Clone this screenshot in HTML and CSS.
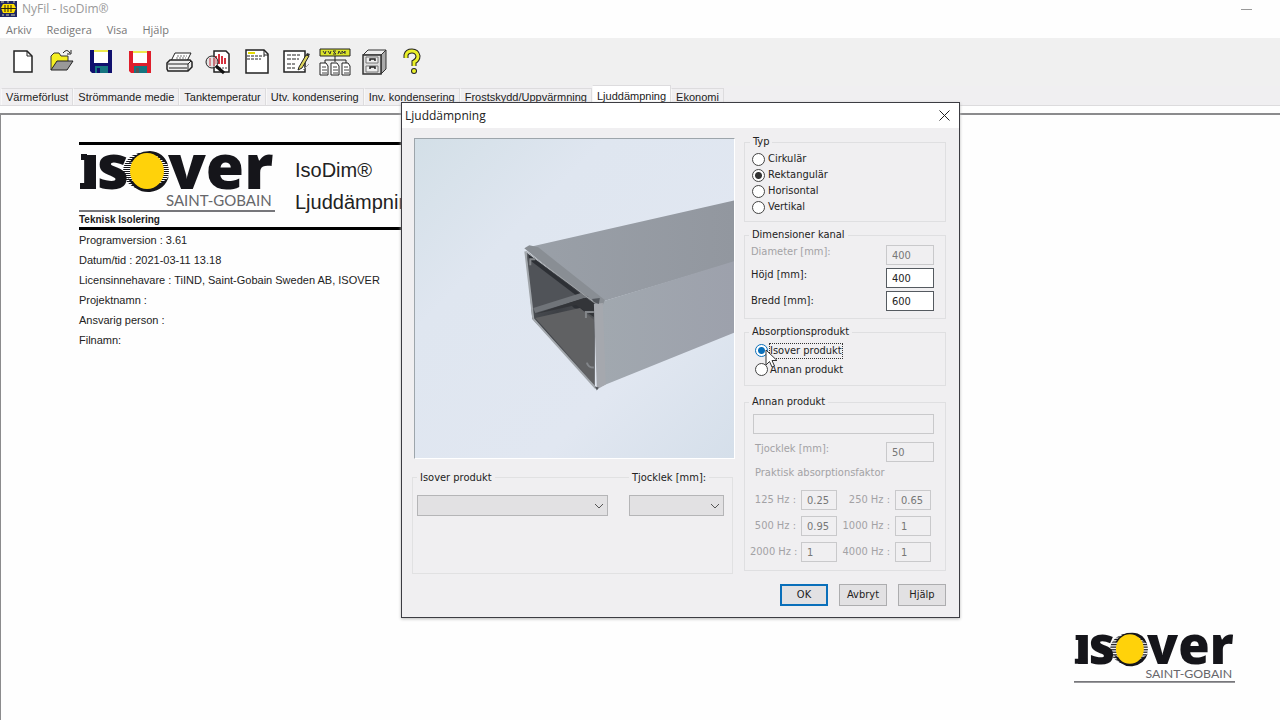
FILE: index.html
```html
<!DOCTYPE html>
<html lang="sv">
<head>
<meta charset="utf-8">
<title>NyFil - IsoDim®</title>
<link rel="stylesheet" href="styles.css">
</head>
<body>
<svg class="defs" width="0" height="0" aria-hidden="true">
  <defs>
    <linearGradient id="bg" x1="0" y1="0" x2="1" y2="1">
      <stop offset="0" stop-color="#d3dfe7"/><stop offset=".3" stop-color="#dfe6f0"/><stop offset=".7" stop-color="#e1e7f1"/><stop offset="1" stop-color="#d5dfea"/>
    </linearGradient>
    <linearGradient id="top" x1="0" y1="0" x2="1" y2="0">
      <stop offset="0" stop-color="#9aa0a8"/><stop offset="1" stop-color="#92979f"/>
    </linearGradient>
    <linearGradient id="side" x1="0" y1="0" x2="1" y2="0">
      <stop offset="0" stop-color="#a1a8af"/><stop offset="1" stop-color="#9da1ac"/>
    </linearGradient>
    <linearGradient id="inside" x1="0" y1="0" x2="1" y2="1">
      <stop offset="0" stop-color="#5a5e63"/><stop offset=".45" stop-color="#3d4045"/><stop offset="1" stop-color="#66676a"/>
    </linearGradient>
    <pattern id="lines" width="4" height="2" patternUnits="userSpaceOnUse"><path d="M0 .5h4" stroke="#15151a"/></pattern>
    <symbol id="isover" viewBox="0 0 196 62">
      <g class="logo-word">
        <text x="1" y="38">ı</text><path d="M2 3h6v6H2zM1 32h15v6H1z" fill="#15151a"/>
        <text x="18" y="38">s</text><text x="89" y="38">ver</text>
      </g>
      <ellipse cx="67" cy="20" rx="23" ry="19" fill="url(#lines)"/>
      <path d="M50 12Q57 0 71 0q14 1 18 14L78 5zM49 27l12 8 20-3q7-3 9-7-4 14-19 16-15 1-22-14z" fill="#15151a"/>
      <ellipse cx="68" cy="20" rx="17" ry="18" fill="#ffd20a"/>
      <text class="logo-sub" x="87" y="55">SAINT-GOBAIN</text>
      <path d="M0 60h196" stroke="#77777b" stroke-width="2"/>
    </symbol>
  </defs>
</svg>
<div class="app">
  <header class="titlebar">
    <svg class="app-icon" width="17" height="16" viewBox="0 0 17 16"><path fill="#202766" d="M0 0h17v16H0z"/><path fill="#ffe000" d="M3 3h11l2 4-2 5H3L1 7z"/><path d="M1 7.500h15M5 4v7M8 4v7M11 4v7" stroke="#282310"/><path d="M2 14h2m2 0h3m2 0h4M1 1h3m3 0h2m4 0h2" stroke="#d7d6a5"/></svg>
    <span class="window-name">NyFil - IsoDim®</span>
    <button class="minimize" aria-label="Minimera"></button>
  </header>
  <nav class="menu"><button>Arkiv</button><button>Redigera</button><button>Visa</button><button>Hjälp</button></nav>
  <div class="toolbar">
    <button aria-label="Ny"><svg viewBox="0 0 32 32"><path d="M7 5h13l5 5v16H7z" fill="#fff" stroke="#222" stroke-width="1.500"/><path d="M20 5v5h5" fill="none" stroke="#222"/></svg></button>
    <button aria-label="Öppna"><svg viewBox="0 0 32 32"><path d="M5 24V10l3-3h5l2 3h7v5" fill="#f5ef20" stroke="#333"/><path d="M5 24l6-9h16l-6 9z" fill="#999" stroke="#222"/><path d="M17 7q4-5 7 0m1-3v4h-4" fill="none" stroke="#222"/></svg></button>
    <button aria-label="Spara"><svg viewBox="0 0 32 32"><path d="M5 4h22v23H7l-2-2z" fill="#10106e"/><path d="M9 5h14v12H9z" fill="#fff"/><path d="M9 4h14v2H9z" fill="#ece94d"/><path d="M10 20h13v7H10z" fill="#167580"/><path d="M12 22h3v5h-3z" fill="#10106e"/></svg></button>
    <button aria-label="Spara som"><svg viewBox="0 0 32 32"><path d="M5 5h22v22H7l-2-2z" fill="#df1e2b"/><path d="M9 6h14v11H9z" fill="#fff"/><path d="M9 5h14v2H9z" fill="#ece94d"/><path d="M10 20h13v7H10z" fill="#167580"/><path d="M12 22h3v5h-3z" fill="#555"/></svg></button>
    <button aria-label="Skriv ut"><svg viewBox="0 0 32 32"><path d="M8 15l4-8h16l-4 8z" fill="#fff" stroke="#222"/><path d="M4 17l3-3h20l2 2v5l-4 4H5l-1-2z" fill="#eee" stroke="#222" stroke-width="1.500"/><path d="M5 18h20l3-3M6 22h18M25 18v7" fill="none" stroke="#222"/><path d="M14 10h10M13 12h10" stroke="#777" stroke-dasharray="2 1"/></svg></button>
    <button aria-label="Förhandsgranska"><svg viewBox="0 0 32 32"><path d="M12 5h12l3 3v18H12z" fill="#fff" stroke="#222" stroke-width="1.500"/><path d="M14 10v8m3-10v10m3-8v8m3-6v6" stroke="#d5313e" stroke-width="2"/><path d="M14 22h12" stroke="#444" stroke-dasharray="2 1"/><circle cx="10" cy="16" r="6" fill="#ddd" fill-opacity=".7" stroke="#222"/><path d="M8 12v8m4-8v8" stroke="#cf3340"/><path d="M14 20l8 7" stroke="#111" stroke-width="3"/></svg></button>
    <button aria-label="Rapport"><svg viewBox="0 0 32 32"><path d="M5 4h18l4 4v19H5z" fill="#fff" stroke="#222" stroke-width="1.500"/><path d="M23 4v5h4" fill="none" stroke="#222"/><path d="M7 7h7" stroke="#e4db00" stroke-width="2"/><path d="M6 10h18M6 13h14" stroke="#222" stroke-dasharray="3 1"/></svg></button>
    <button aria-label="Redigera rapport"><svg viewBox="0 0 32 32"><path d="M4 5h21v21H4z" fill="#fff" stroke="#222" stroke-width="1.500"/><path d="M7 9h13M7 13h12M7 18h8M7 22h8" stroke="#222" stroke-dasharray="4 1"/><path d="M19 21l7-12 3 1-7 12-4 2z" fill="#ddd45b" stroke="#222"/><path d="M26 9l1-2 3 1-1 2" fill="#333"/><path d="M23 24l6-6" stroke="#999"/></svg></button>
    <button aria-label="VVS AMA"><svg viewBox="0 0 32 32"><path d="M1 3h30v7H1z" fill="#dbe42a" stroke="#222"/><path d="M4 5l2 3 1-3m2 0l2 3 1-3m5 0h-3l3 3h-3m5 0l1-3 2 3m1 0V5l2 2 1-2v3" fill="none" stroke="#333"/><path d="M16 10v6M6 18v-4h21v4" fill="none" stroke="#222"/><path d="M1 17h6l2 3v9H1zM12 17h6l2 3v9h-8zM23 17h6l2 3v9h-8z" fill="#fff" stroke="#222"/><path d="M3 21h4m-4 3h5m-5 3h5m6-6h4m-4 3h5m-5 3h5m6-6h4m-4 3h5m-5 3h5" stroke="#444"/></svg></button>
    <button aria-label="Arkivskåp"><svg viewBox="0 0 32 32"><path d="M5 9l5-5h18l-5 5z" fill="#eee" stroke="#333"/><path d="M23 9l5-5v19l-5 5z" fill="#aaa" stroke="#333"/><path d="M5 9h18v19H5z" fill="#ddd" stroke="#333" stroke-width="1.500"/><path d="M8 11h12v6H8zM8 20h12v6H8z" fill="#eee" stroke="#777"/><path d="M12 15v-2h5v2m-5 8v-2h5v2" fill="none" stroke="#222" stroke-width="1.500"/></svg></button>
    <button aria-label="Hjälp"><svg viewBox="0 0 32 32"><path d="M9 12V9q1-4 6-4t6 5q0 4-4 6v4" fill="none" stroke="#222" stroke-width="5"/><circle cx="17" cy="25" r="3" fill="#222"/><path d="M9 12V9q1-4 6-4t6 5q0 4-4 6v4" fill="none" stroke="#eaf02a" stroke-width="3"/><circle cx="17" cy="25" r="2" fill="#eaf02a"/></svg></button>
  </div>
  <div class="tabs" role="tablist">
    <button role="tab">Värmeförlust</button><button role="tab">Strömmande medie</button><button role="tab">Tanktemperatur</button><button role="tab">Utv. kondensering</button><button role="tab">Inv. kondensering</button><button role="tab">Frostskydd/Uppvärmning</button><button role="tab" aria-selected="true" class="selected">Ljuddämpning</button><button role="tab">Ekonomi</button>
  </div>
  <main class="page">
    <div class="doc-head">
      <div>
        <svg class="doc-logo" viewBox="0 0 196 62" role="img" aria-label="Isover Saint-Gobain"><use href="#isover"/></svg>
        <div class="division">Teknisk Isolering</div>
      </div>
      <div class="doc-title"><h1>IsoDim®</h1><h1>Ljuddämpning</h1></div>
    </div>
    <div class="doc-info">
      <p>Programversion : 3.61</p><p>Datum/tid : 2021-03-11 13.18</p><p>Licensinnehavare : TiIND, Saint-Gobain Sweden AB, ISOVER</p><p>Projektnamn :</p><p>Ansvarig person :</p><p>Filnamn:</p>
    </div>
  </main>
</div>
<svg class="watermark" viewBox="0 0 196 62" role="img" aria-label="Isover Saint-Gobain"><use href="#isover"/></svg>

<form class="dialog" role="dialog" aria-labelledby="dialog-title">
  <div class="dialog-bar"><span id="dialog-title">Ljuddämpning</span>
    <button type="button" aria-label="Stäng"><svg width="11" height="11" viewBox="0 0 11 11"><path d="M.5.5l10 10m0-10l-10 10" stroke="#222"/></svg></button>
  </div>
  <div class="dialog-body">
    <div class="left">
      <svg class="duct" viewBox="0 0 321 321" role="img" aria-label="Rektangulär kanal">
        <path fill="url(#bg)" d="M0 0h321v321H0z"/>
        <path fill="url(#top)" d="M114 109L321 62v62L187 164z"/>
        <path fill="url(#side)" d="M187 164L321 123v72L187 249z"/>
        <path fill="#898e94" d="M110 110l5-3 9 2 67 53-2 5-8 1z"/>
        <path fill="url(#inside)" d="M112 114l69 51v84l-63-68z"/>
        <path fill="#2d3035" d="M114 116l66 50v10l-20-6-45-45z"/>
        <path fill="#505358" d="M113 120l50 38-44 14z"/>
        <path fill="#707479" d="M119 170l48-15 8 4-54 16z"/>
        <path fill="#333539" d="M121 176l41-9 18 12v-14l-10-5z"/>
        <path fill="#606163" d="M121 180l45-10 14 12v64z"/>
        <path d="M172 180v-6h8m-7 51q1 5 7 5M116 127v-6h5" fill="none" stroke="#83868a" stroke-width="2"/>
        <path d="M111 113l8 68 63 70" fill="none" stroke="#a1a6ab" stroke-width="2"/>
        <path d="M112 113l69 52" stroke="#a1a4a8"/>
        <path fill="#a5a8ae" d="M180 166l9-1 3 82-9 5z"/>
        <path fill="#54585e" d="M178 161l8-1-1 6-5-2zM181 249l4 1-2 3z"/>
      </svg>
      <div class="product-box">
        <label for="product">Isover produkt</label><label for="thickness">Tjocklek [mm]:</label>
        <div class="pick"><select id="product"><option></option></select><svg width="10" height="6" viewBox="0 0 10 6"><path d="M1 1l4 4 4-4" fill="none" stroke="#555"/></svg></div>
        <div class="pick"><select id="thickness"><option></option></select><svg width="10" height="6" viewBox="0 0 10 6"><path d="M1 1l4 4 4-4" fill="none" stroke="#555"/></svg></div>
      </div>
    </div>
    <div class="right">
      <fieldset class="type"><legend>Typ</legend>
        <label class="choice"><input type="radio" name="type">Cirkulär</label>
        <label class="choice"><input type="radio" name="type" checked>Rektangulär</label>
        <label class="choice"><input type="radio" name="type">Horisontal</label>
        <label class="choice"><input type="radio" name="type">Vertikal</label>
      </fieldset>
      <fieldset class="size"><legend>Dimensioner kanal</legend>
        <div class="field off"><label for="dia">Diameter [mm]:</label><input id="dia" value="400" disabled></div>
        <div class="field"><label for="hojd">Höjd [mm]:</label><input id="hojd" value="400"></div>
        <div class="field mid"><label for="bredd">Bredd [mm]:</label><input id="bredd" value="600"></div>
      </fieldset>
      <fieldset class="absorption"><legend>Absorptionsprodukt</legend>
        <label class="choice active"><input type="radio" name="abs" checked><span>Isover produkt</span>
          <svg class="pointer" width="13" height="20" viewBox="0 0 13 20"><path d="M1 1v15l3.500-3.500L7 18l2.500-1L7 11.500h5z" fill="#fff" stroke="#333"/></svg></label>
        <label class="choice"><input type="radio" name="abs">Annan produkt</label>
      </fieldset>
      <fieldset class="other off"><legend>Annan produkt</legend>
        <input class="wide" aria-label="Annan produkt" disabled>
        <div class="field"><label for="tj">Tjocklek [mm]:</label><input id="tj" value="50" disabled></div>
        <p>Praktisk absorptionsfaktor</p>
        <div class="bands">
          <label for="f125">125 Hz :</label><input id="f125" value="0.25" disabled><label for="f250">250 Hz :</label><input id="f250" value="0.65" disabled>
          <label for="f500">500 Hz :</label><input id="f500" value="0.95" disabled><label for="f1000">1000 Hz :</label><input id="f1000" value="1" disabled>
          <label for="f2000">2000 Hz :</label><input id="f2000" value="1" disabled><label for="f4000">4000 Hz :</label><input id="f4000" value="1" disabled>
        </div>
      </fieldset>
      <div class="actions"><button type="button" class="default">OK</button><button type="button">Avbryt</button><button type="button">Hjälp</button></div>
    </div>
  </div>
</form>
</body>
</html>
```

FILE: styles.css
```css
* { box-sizing: border-box; }
body { margin: 0; background: #fefefe; color: #222; font: 11px/14px "DejaVu Sans Condensed", "DejaVu Sans", sans-serif; }
button, input, select { font: inherit; color: inherit; margin: 0; }
p, h1 { margin: 0; }
.defs { position: absolute; }
.app { min-height: 100vh; display: flex; flex-direction: column; }

.titlebar { height: 18px; display: flex; align-items: center; gap: 5px; color: #999; font: 12px/16px "Open Sans", sans-serif; }
.window-name { flex: 1; }
.minimize { width: 11px; height: 1px; padding: 0; border: 0; background: #999; margin-right: 28px; }
.menu { height: 20px; display: flex; gap: 15px; padding: 4px 6px 0; align-items: center; }
.menu button { border: 0; padding: 0; background: none; color: #777; font: 11px/16px "Open Sans", sans-serif; }

.toolbar { height: 48px; background: #f0f0f0; display: flex; align-items: center; padding-left: 3px; }
.toolbar button { width: 39px; height: 40px; padding: 0; border: 0; background: none; display: grid; place-items: center; }
.toolbar svg { width: 32px; height: 32px; }

.tabs { height: 20px; background: #f0eff1; display: flex; align-items: flex-end; border-bottom: 1px solid #dcdbdd; padding-left: 1px; }
.tabs button { height: 17px; border: 1px solid #dddcde; border-left-color: #f8f8f8; border-bottom: 0; background: #f0eff1; padding: 0 4px; white-space: nowrap; font: 11px/16px "Liberation Sans", Arial, sans-serif; }
.tabs .selected { height: 20px; background: #fff; }

.page { flex: 1; margin-top: 7px; border-top: 2px solid #8b8b8d; border-left: 1px solid #8b8b8d; padding: 27px 78px; font-family: "Liberation Sans", Arial, sans-serif; }
.doc-head { width: 620px; max-width: 100%; border-top: 3px solid #000; border-bottom: 3px solid #000; display: flex; gap: 20px; padding-top: 6px; }
.doc-logo { display: block; width: 196px; height: 62px; }
.division { font-weight: bold; font-size: 10px; line-height: 14px; }
.doc-title { padding-top: 3px; }
.doc-title h1 { font-weight: normal; font-size: 20px; line-height: 32px; }
.doc-info { font-size: 11px; line-height: 20px; }
.logo-word { font: 800 62px "Open Sans", sans-serif; fill: #15151a; }
.logo-sub { font: 15px Lato, sans-serif; fill: #66666a; }
.watermark { position: absolute; right: 45px; bottom: 36px; width: 161px; height: 52px; }

.dialog { position: absolute; left: 401px; top: 102px; width: 559px; background: #f0eff1; border: 1px solid #3c3c42; box-shadow: 0 1px 3px #bbb; }
.dialog-bar { height: 25px; background: #fff; display: flex; align-items: center; justify-content: space-between; padding: 0 9px 0 3px; font: 12px/16px "Open Sans", sans-serif; }
.dialog-bar button { border: 0; padding: 0; background: none; height: 11px; display: flex; }
.dialog-body { display: grid; grid-template-columns: 321px 202px; gap: 10px; padding: 7px 12px 11px 11px; }
.duct { display: block; width: 321px; height: 321px; margin: 3px 1px 0; border: 1px solid #fff; border-top-color: #9da5ab; border-left-color: #9da5ab; }
.product-box { margin: 18px 1px 0 -1px; height: 97px; border: 1px solid #e1e1e2; display: grid; grid-template-columns: 191px 95px; grid-template-rows: 17px 21px; column-gap: 21px; padding-left: 4px; }
.product-box label { justify-self: start; margin-top: -7px; height: 14px; background: #f0eff1; padding: 0 3px; }
.pick { position: relative; }
.pick select { width: 100%; height: 21px; appearance: none; border: 1px solid #b5b5b7; border-radius: 0; background: #e2e1e3; }
.pick svg { position: absolute; right: 4px; top: 8px; pointer-events: none; }

.right { display: flex; flex-direction: column; gap: 6px; }
fieldset { margin: 0; min-width: 0; border: 1px solid #dfdfe1; padding: 2px 11px 6px 6px; }
legend { padding: 0 3px; margin-left: -2px; height: 14px; }
.choice { display: flex; align-items: center; gap: 3px; height: 16px; position: relative; }
.choice input { appearance: none; width: 13px; height: 13px; border: 1px solid #444; border-radius: 50%; background: #fff; }
.choice input:checked { background: radial-gradient(circle, #333 3px, #fff 4px); }
.type { padding-left: 7px; }
.size { padding: 3px 11px 7px 6px; display: grid; gap: 3px; }
.field { display: flex; justify-content: space-between; }
.field.mid { align-items: center; }
.field input { width: 48px; }
.field input, .bands input, .wide { height: 20px; border: 1px solid #555a60; border-radius: 0; padding: 0 5px; background: #fff; }
.dialog input:disabled { color: #777; background: #f0eff1; border-color: #c9c9cb; }
.off label, .off p { color: #a3a2a5; }
.absorption .choice { height: 19px; gap: 2px; padding-left: 4px; }
.absorption .active input:checked { border-color: #0a6fba; background: radial-gradient(circle, #0a6fba 3px, #fff 4px); }
.active span { outline: 1px dotted #333; }
.pointer { position: absolute; left: 14px; top: 8px; z-index: 1; }
.other { margin-top: 3px; padding: 5px 11px 8px 5px; }
.other legend { margin-left: -1px; color: #222; }
.other .field, .other p { padding-left: 5px; }
.wide { display: block; width: calc(100% - 3px); margin: 0 0 8px 3px; }
.other p { line-height: 16px; margin: 3px 0 9px; }
.bands { display: grid; grid-template-columns: 46px 36px 48px 36px; gap: 6px 5px; align-items: center; }
.bands label { text-align: right; white-space: nowrap; }
.bands input { width: 36px; }
.actions { display: flex; justify-content: flex-end; gap: 11px; margin-top: 7px; }
.actions button { width: 48px; height: 22px; padding: 0; border: 1px solid #adadaf; background: #e2e1e3; }
.actions .default { border: 2px solid #0a6fba; }
```
